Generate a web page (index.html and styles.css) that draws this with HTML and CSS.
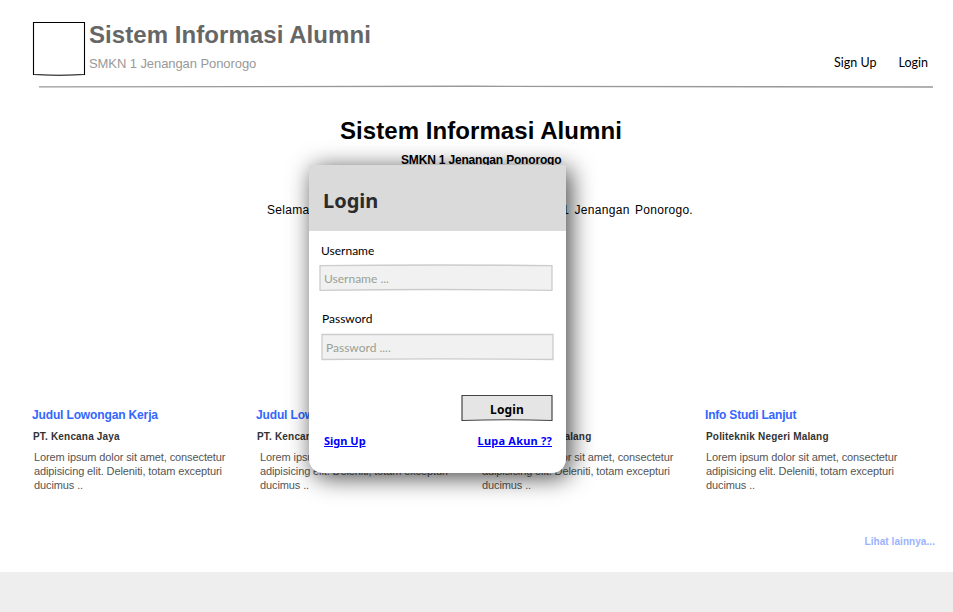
FILE: index.html
```html
<!DOCTYPE html>
<html lang="id">
<head>
<meta charset="utf-8">
<title>Sistem Informasi Alumni</title>
<link rel="stylesheet" href="styles.css">
</head>
<body>
<header class="header">
  <svg class="logo" width="54" height="56" viewBox="0 0 54 56"><path d="M1.5 53.5V1.5H52.5V53.5Q27 55 1.5 53.5Z"/></svg>
  <div class="brand">
    <div class="brand-name"><span>Sistem Informasi Alumni</span></div>
    <div class="brand-school"><span>SMKN 1 Jenangan Ponorogo</span></div>
  </div>
  <nav class="nav"><a class="nav-signup">Sign Up</a><a class="nav-login">Login</a></nav>
</header>
<svg class="rule" width="894" height="4" viewBox="0 0 894 4"><path d="M0 1.9Q447 .6 894 2" /></svg>
<main class="main">
  <h1><span>Sistem Informasi Alumni</span></h1>
  <h2><span>SMKN 1 Jenangan Ponorogo</span></h2>
  <p class="welcome">Selamat datang di Sistem Informasi Alumni SMKN 1 Jenangan Ponorogo.</p>
  <section class="cards">
    <article class="card"><h3>Judul Lowongan Kerja</h3><h4>PT. Kencana Jaya</h4><p>Lorem ipsum dolor sit amet, consectetur<br>adipisicing elit. Deleniti, totam excepturi<br>ducimus ..</p></article>
    <article class="card card-second"><h3>Judul Lowongan Kerja</h3><h4>PT. Kencana Jaya</h4><p>Lorem ipsum dolor sit amet, consectetur<br>adipisicing elit. Deleniti, totam excepturi<br>ducimus ..</p></article>
    <article class="card card-third"><h3>Info Beasiswa</h3><h4>Politeknik Kota Malang</h4><p>Lorem ipsum dolor sit amet, consectetur<br>adipisicing elit. Deleniti, totam excepturi<br>ducimus ..</p></article>
    <article class="card card-fourth"><h3>Info Studi Lanjut</h3><h4>Politeknik Negeri Malang</h4><p>Lorem ipsum dolor sit amet, consectetur<br>adipisicing elit. Deleniti, totam excepturi<br>ducimus ..</p></article>
  </section>
  <a class="more">Lihat lainnya...</a>
</main>
<footer class="footer"></footer>
<div class="modal">
  <div class="modal-head">Login</div>
  <form class="modal-body">
    <label class="label-user">Username</label>
    <div class="field field-user">
      <svg width="234" height="28" viewBox="0 0 234 28"><path d="M1 1.6Q117 .4 233 1.6V26.4Q117 24.6 1 26.4Z"/></svg>
      <span>Username ...</span>
    </div>
    <label class="label-pass">Password</label>
    <div class="field field-pass">
      <svg width="234" height="28" viewBox="0 0 234 28"><path d="M1 1.5H232V26.5Q117 25.3 1 26.5Z"/></svg>
      <span>Password ....</span>
    </div>
    <div class="submit">
      <svg width="92" height="28" viewBox="0 0 92 28"><path d="M1 1.5H91V26.5Q46 25 1 26.5Z"/></svg>
      <span>Login</span>
    </div>
    <div class="links"><a class="link-signup">Sign Up</a><a class="link-forgot">Lupa Akun ??</a></div>
  </form>
</div>
</body>
</html>
```
FILE: styles.css
```css
* { box-sizing: border-box; }
body { margin: 0; width: 953px; height: 612px; overflow: hidden; display: flex; flex-direction: column; background: #fff; font-family: "Liberation Sans", Arial, sans-serif; color: #000; }
h1, h2, h3, h4, p { margin: 0; white-space: nowrap; }
svg { display: block; }

.header { display: flex; height: 85px; padding: 21px 24px 0 32px; flex: none; }
.logo path { fill: #fff; stroke: #000; stroke-width: 1.1; }
.brand { margin-left: 3px; white-space: nowrap; }
.brand-name { font-size: 24px; line-height: 28px; font-weight: bold; color: #666; letter-spacing: .06px; }
.brand-school { font-size: 13px; line-height: 16px; margin-top: 7px; color: #999; letter-spacing: -.08px; }
.nav { margin: 34px 1px 0 auto; display: flex; gap: 22px; font: 12.5px/16px Lato, sans-serif; }
.rule { margin: 0 0 0 39px; flex: none; }
.rule path { fill: none; stroke: #999; stroke-width: 1.3; }

.main { height: 483px; flex: none; display: flex; flex-direction: column; }
h1 { margin: 28px 0 0 340px; font-size: 24px; line-height: 28px; letter-spacing: .06px; }
h2 { margin: 8px 0 0 401px; font-size: 12px; line-height: 14px; letter-spacing: -.18px; }
.welcome { margin: 36px 0 0 267px; width: 426px; font-size: 12px; line-height: 14px; letter-spacing: .3px; text-align-last: justify; }
.cards { display: grid; grid-template-columns: 224px 224px 225px 1fr; margin: 191px 0 0 32px; }
.card h3 { font-size: 12px; line-height: 14px; color: #36f; letter-spacing: -.14px; }
.card h4 { margin: 9px 0 0 1px; font-size: 10px; line-height: 12px; color: #333; letter-spacing: .18px; }
.card p { margin: 7px 0 0 2px; font-size: 11px; line-height: 14px; color: #555; letter-spacing: -.11px; }
.card-second p { margin-left: 4px; }
.card-third h4 { margin-left: -2px; }
.card-fourth h3 { letter-spacing: -.2px; }
.card-fourth h4, .card-fourth p { margin-left: 1px; }
.more { margin: 44px 18px 0 auto; font-size: 10px; line-height: 12px; font-weight: bold; color: #9bb2ff; letter-spacing: .06px; }
.footer { flex: 1; background: #eee; }

.modal { position: absolute; left: 309px; top: 165px; width: 257px; height: 308px; background: #fff; border-radius: 0 0 14px 14px; box-shadow: 4px 4px 25px rgba(0,0,0,.75); }
.modal-head { height: 66px; padding: 23px 14px 0; background: #dadada; color: #2b2b2b; font: bold 20px/26px "Noto Sans", sans-serif; }
.modal-body { display: flex; flex-direction: column; font: 12px/16px Lato, sans-serif; }
.label-user { margin: 12px 0 0 12px; }
.label-pass { margin: 19px 0 0 13px; }
.field, .submit { display: grid; height: 28px; }
.field > *, .submit > * { grid-area: 1 / 1; }
.field span { align-self: center; padding: 2px 0 0 5px; color: #999f94; }
.field path { fill: #f1f1f1; stroke: #ccc; stroke-width: 1.3; }
.field-user { width: 234px; margin: 5px 0 0 10px; }
.field-pass { width: 234px; margin: 6px 0 0 12px; }
.submit { width: 92px; margin: 33px 0 0 152px; font: bold 12px/16px "Noto Sans", sans-serif; }
.submit span { place-self: center; padding-top: 3px; letter-spacing: .15px; }
.submit path { fill: #e5e5e5; stroke: #444; stroke-width: 1.2; }
.links { display: flex; justify-content: space-between; margin: 11px 14px 0 15px; font: bold 11px/16px "Noto Sans", sans-serif; color: #00f; }
.links a { text-decoration: underline; }
.link-forgot { letter-spacing: .22px; }
```
